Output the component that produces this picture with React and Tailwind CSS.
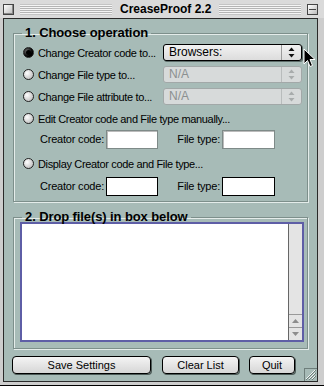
import React from 'react';

const font = { fontFamily: '"Liberation Sans", Arial, sans-serif' };

const Radio = ({ checked }) => (
  <span
    className={`w-[11px] h-[11px] rounded-full border border-[#222] shrink-0 flex items-center justify-center ${
      checked
        ? 'bg-[radial-gradient(circle_at_35%_35%,#777,#000_60%)]'
        : 'bg-[radial-gradient(circle_at_35%_35%,#fff,#c8c8c8_70%,#999)]'
    }`}
  >
    {checked && <span className="w-[5px] h-[5px] rounded-full bg-black" />}
  </span>
);

const Arrows = ({ color }) => (
  <svg width="7" height="11" viewBox="0 0 7 11">
    <path d="M3.5 0.5 L6.5 4 L0.5 4 Z" fill={color} />
    <path d="M3.5 10.5 L6.5 7 L0.5 7 Z" fill={color} />
  </svg>
);

const Popup = ({ label, disabled }) => (
  <div
    className={`w-[139px] h-[17px] flex rounded-[3px] border ${
      disabled
        ? 'border-[#a2a8a8] bg-[#d7dada] text-[#8b9090]'
        : 'border-black bg-[linear-gradient(#f2f2f2,#dcdcdc)] text-black shadow-[1px_1px_0_#5d6d6a]'
    }`}
  >
    <span className="flex-1 pl-[5px] text-[12px] leading-[15px]">{label}</span>
    <span
      className={`w-[20px] flex items-center justify-center border-l ${
        disabled ? 'border-[#b8bcbc]' : 'border-[#9a9a9a]'
      }`}
    >
      <Arrows color={disabled ? '#a8acac' : '#111'} />
    </span>
  </div>
);

const OptionRow = ({ checked, label, popup, disabled }) => (
  <div className="h-[17px] flex items-center">
    <div className="w-[149px] flex items-center gap-[4px] pl-[9px]">
      <Radio checked={checked} />
      <span className="text-[11px] leading-[14px] tracking-[-0.35px] whitespace-nowrap">{label}</span>
    </div>
    {popup && <Popup label={popup} disabled={disabled} />}
  </div>
);

const CodeFields = ({ dark }) => (
  <div className="h-[19px] flex items-center">
    <span className="w-[92px] text-right text-[11px] tracking-[-0.2px] pr-[2px]">Creator code:</span>
    <span
      className={`w-[52px] h-[19px] bg-white border ${
        dark ? 'border-black' : 'border-[#7e8a88] shadow-[inset_1px_1px_0_#bbb]'
      }`}
    />
    <span className="w-[64px] text-right text-[11px] tracking-[-0.2px] pr-[2px]">File type:</span>
    <span
      className={`w-[53px] h-[19px] bg-white border ${
        dark ? 'border-black' : 'border-[#7e8a88] shadow-[inset_1px_1px_0_#bbb]'
      }`}
    />
  </div>
);

const Button = ({ children, w }) => (
  <button
    className={`${w} h-[18px] rounded-[4px] border border-black bg-[linear-gradient(#f4f4f4,#d6d6d6)] shadow-[1px_1px_0_#4d5b58] text-[11px] leading-[16px] text-black`}
  >
    {children}
  </button>
);

const Stripes = ({ w }) => (
  <div className={`${w} h-[11px] bg-[repeating-linear-gradient(#f4f4f4_0px,#f4f4f4_1px,#b4b4b4_1px,#b4b4b4_2px)] border-y border-[#c4c4c4]`} />
);

export default function App() {
  return (
    <div className="w-[324px] h-[388px] bg-white relative overflow-hidden" style={font}>
      <div className="h-[386px] bg-[#cdcdcd] border-b border-black flex flex-col">
        {/* title bar */}
        <div className="h-[18px] flex items-center pl-[3px] pr-[6px] gap-[6px] bg-[#dadada]">
          <span className="w-[11px] h-[11px] border border-[#444] bg-[linear-gradient(135deg,#fff,#bbb)] shadow-[inset_-1px_-1px_0_#888]" />
          <Stripes w="w-[92px]" />
          <span className="text-[12px] font-bold leading-[14px] whitespace-nowrap px-[2px]">CreaseProof 2.2</span>
          <Stripes w="flex-1" />
          <span className="w-[11px] h-[11px] border border-[#444] bg-[linear-gradient(135deg,#fff,#bbb)] flex flex-col justify-center px-[1px]">
            <span className="h-px bg-[#444]" />
          </span>
        </div>

        {/* content */}
        <div className="ml-[3px] mr-[6px] h-[364px] border border-[#2a2a2a] bg-[#a7bbb7] relative pl-[9px] pr-[8px] pt-[8px]">
          <fieldset className="w-[295px] h-[175px] border border-[#7d8f8b] shadow-[inset_1px_1px_0_#e4ecea,1px_1px_0_#e4ecea]">
            <legend className="ml-[8px] px-[3px] text-[13px] font-bold leading-[12px] tracking-[-0.1px]">1. Choose operation</legend>
            <div className="flex flex-col pt-[5px]">
              <OptionRow checked label="Change Creator code to..." popup="Browsers:" />
              <div className="h-[5px]" />
              <OptionRow label="Change File type to..." popup="N/A" disabled />
              <div className="h-[5px]" />
              <OptionRow label="Change File attribute to..." popup="N/A" disabled />
              <div className="h-[5px]" />
              <OptionRow label="Edit Creator code and File type manually..." />
              <div className="h-[3px]" />
              <CodeFields />
              <div className="h-[6px]" />
              <OptionRow label="Display Creator code and File type..." />
              <div className="h-[5px]" />
              <CodeFields dark />
            </div>
          </fieldset>

          <fieldset className="mt-[9px] w-[295px] h-[138px] border border-[#7d8f8b] shadow-[inset_1px_1px_0_#e4ecea,1px_1px_0_#e4ecea]">
            <legend className="ml-[8px] px-[3px] text-[13px] font-bold leading-[12px] tracking-[-0.1px]">2. Drop file(s) in box below</legend>
            <div className="ml-[6px] mr-[3px] mt-[-1px] h-[120px] border-2 border-[#5e5ea6] flex">
              <div className="flex-1 bg-white border-r border-[#666]" />
              <div className="w-[13px] bg-[#e4e4e4] flex flex-col justify-end">
                <div className="h-[13px] border-t border-[#999] flex items-center justify-center">
                  <svg width="7" height="4" viewBox="0 0 7 4"><path d="M3.5 0 L7 4 L0 4 Z" fill="#8c8c8c" /></svg>
                </div>
                <div className="h-[13px] border-t border-[#999] flex items-center justify-center">
                  <svg width="7" height="4" viewBox="0 0 7 4"><path d="M3.5 4 L7 0 L0 0 Z" fill="#8c8c8c" /></svg>
                </div>
              </div>
            </div>
          </fieldset>

          <div className="mt-[7px] flex ml-[-1px]">
            <Button w="w-[139px]">Save Settings</Button>
            <div className="w-[11px]" />
            <Button w="w-[77px]">Clear List</Button>
            <div className="w-[10px]" />
            <Button w="w-[46px]">Quit</Button>
          </div>

          {/* resize grip */}
          <div className="absolute right-0 bottom-0 w-[13px] h-[13px] border-l border-t border-[#6e7e7b] bg-[#a7bbb7] flex items-center justify-center">
            <svg width="10" height="10" viewBox="0 0 10 10">
              <path d="M9 3 L3 9 M9 6 L6 9 M9 0 L0 9" stroke="#f0f4f3" strokeWidth="1" />
              <path d="M10 3 L3 10 M10 6 L6 10 M10 0 L0 10" stroke="#6e7e7b" strokeWidth="1" />
            </svg>
          </div>
        </div>
      </div>

      {/* mouse pointer */}
      <svg className="absolute left-[303px] top-[48px]" width="13" height="20" viewBox="0 0 13 20">
        <path d="M1 1 L1 16 L4.5 12.5 L7 18.5 L9.5 17.5 L7 11.5 L12 11.5 Z" fill="#000" stroke="#fff" strokeWidth="1" />
      </svg>
    </div>
  );
}
